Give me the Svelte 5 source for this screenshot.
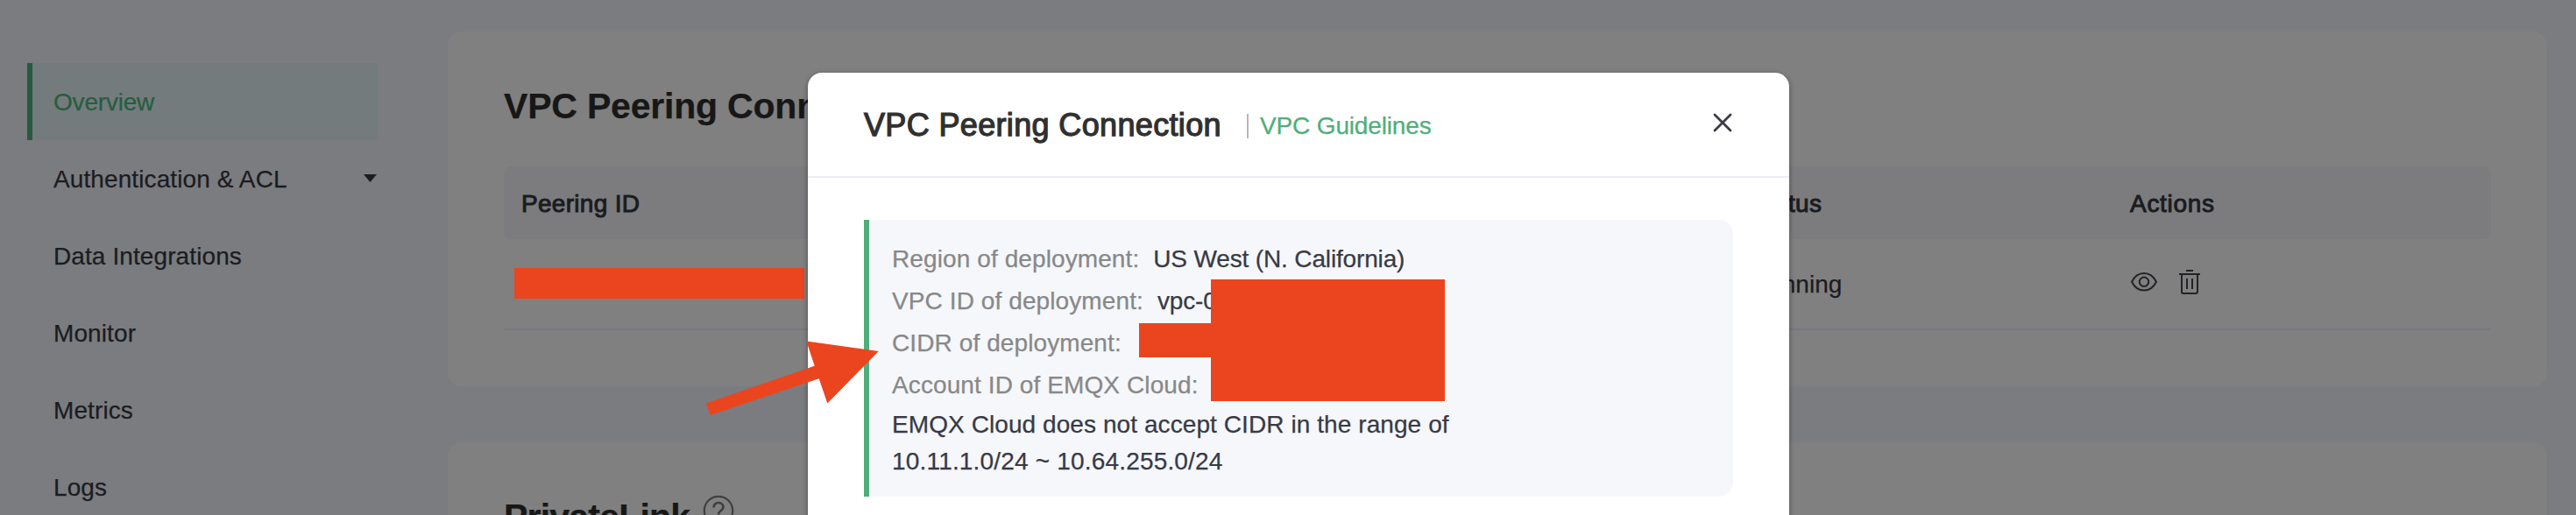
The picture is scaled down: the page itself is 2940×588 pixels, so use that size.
<script>
  const menu = ['Overview', 'Authentication & ACL', 'Data Integrations', 'Monitor', 'Metrics', 'Logs'];
</script>

<div class="page">
  <nav>
    {#each menu as item, i}
      <div class="item" class:active={i === 0}>
        <span>{item}</span>
        {#if i === 1}
          <svg class="caret" width="15" height="9" viewBox="0 0 15 9"><path d="M0 0h15L7.5 9z" fill="#1b1c20" /></svg>
        {/if}
      </div>
    {/each}
  </nav>

  <main>
    <section class="card">
      <h1>VPC Peering Connection</h1>
      <div class="row head"><span>Peering ID</span><span>Status</span><span class="last">Actions</span></div>
      <div class="row body">
        <span><i class="mask id"></i></span>
        <span class="state">Running</span>
        <span class="actions">
          <svg width="32" height="26" viewBox="0 0 32 26" fill="none" stroke="#222326" stroke-width="2">
            <path d="M2 12.8C5.400 6 10 3 16 3s10.600 3 14 9.800C26.600 19.600 22 22.600 16 22.600S5.400 19.600 2 12.800z" stroke-linejoin="round" />
            <circle cx="16" cy="12.800" r="5.200" />
          </svg>
          <svg width="24" height="28" viewBox="0 0 24 28" fill="none" stroke="#222326" stroke-width="2">
            <path d="M8 1h8M0 5h24M3 5v20q0 2 2 2h14q2 0 2-2V5M9 10v12M15 10v12" />
          </svg>
        </span>
      </div>
    </section>
    <section class="card second">
      <h1>PrivateLink
        <svg width="36" height="36" viewBox="0 0 36 36" fill="none" stroke="#3f3f40" stroke-width="2.200">
          <circle cx="18" cy="18" r="16.200" />
          <path d="M12.600 14.500c0-3.300 2.200-5.500 5.400-5.500s5.400 2 5.400 5c0 4-5.400 4.200-5.400 8.500" stroke-width="2.600" />
          <circle cx="18" cy="26.500" r=".8" />
        </svg>
      </h1>
    </section>
  </main>

  <div class="modal">
    <header>
      <h2>VPC Peering Connection</h2>
      <span class="bar"></span>
      <a href="#guidelines">VPC Guidelines</a>
      <svg class="close" width="22" height="22" viewBox="0 0 22 22"><path d="M2 2l18 18M20 2L2 20" stroke="#3a3b45" stroke-width="2.800" stroke-linecap="round" /></svg>
    </header>
    <div class="info">
      <p><label>Region of deployment:</label><b>US West (N. California)</b></p>
      <p><label>VPC ID of deployment:</label><b>vpc-0</b></p>
      <p class="wide"><label>CIDR of deployment:</label><b>1</b></p>
      <p><label>Account ID of EMQX Cloud:</label></p>
      <div class="note">EMQX Cloud does not accept CIDR in the range of<br /><span>10.11.1.0/24 ~ 10.64.255.0/24</span></div>
    </div>
  </div>

  <i class="mask cidr"></i>
  <i class="mask details"></i>
  <svg class="arrow" width="200" height="90" viewBox="804 387 200 90">
    <path d="M805.700 460.500L929.700 417.800L920.300 389.600L1002.700 401L944.300 460.500L934.700 432.300L810.800 474z" fill="#eb451f" />
  </svg>
</div>

<style>
  :global(body) { overflow: hidden; }
  .page {
    position: relative;
    box-sizing: border-box;
    width: 2940px;
    height: 588px;
    overflow: hidden;
    display: flex;
    background: #7b7c80;
    color: #1b1c20;
    font: 28px/40px "Liberation Sans", Arial, sans-serif;
    -webkit-text-stroke: 0.25px currentColor;
  }
  nav { width: 400px; margin: 72px 80px 0 31px; flex: none; }
  .item {
    box-sizing: border-box;
    height: 88px;
    padding-left: 24px;
    border-left: 6px solid transparent;
    display: flex;
    align-items: center;
    justify-content: space-between;
    letter-spacing: 0.1px;
  }
  .item.active { color: #265e3f; background: #747b7d; border-color: #275b40; letter-spacing: -0.2px; }
  .item span { padding-top: 1px; }
  .caret { margin: -1px 1px 0 0; }
  main { width: 2396px; flex: none; padding-top: 36px; display: flex; flex-direction: column; gap: 64px; }
  .card {
    box-sizing: border-box;
    flex: none;
    height: 405px;
    border-radius: 16px;
    background: #808080;
    padding: 60px 64px 0;
  }
  h1 {
    margin: 0 0 44px;
    height: 50px;
    font-size: 41px;
    line-height: 50px;
    letter-spacing: -0.2px;
    color: #171717;
    display: flex;
    gap: 15px;
  }
  .second h1 { letter-spacing: -0.8px; }
  .row { display: grid; grid-template-columns: 1403px 432px 1fr; align-items: center; padding-left: 20px; }
  .head { height: 83px; background: #7c7c7f; border-radius: 8px; letter-spacing: 0.3px; -webkit-text-stroke-width: 1px; }
  .head span { padding-top: 2px; }
  .head .last { letter-spacing: 0.7px; padding-left: 1px; }
  .body { height: 102px; border-bottom: 2px solid #777882; }
  .state { padding-top: 1px; }
  .actions { display: flex; align-items: center; gap: 24px; margin: -4px 0 0 1px; }
  .mask { background: #eb451f; }
  .id { display: block; width: 331px; height: 35px; margin: -1px 0 0 -8px; }
  .modal {
    position: absolute;
    left: 922px;
    top: 83px;
    width: 1120px;
    height: 560px;
    border-radius: 16px;
    background: #fff;
    box-shadow: 0 2px 6px rgba(0, 0, 0, .4);
  }
  header {
    box-sizing: border-box;
    height: 120px;
    padding: 0 64px;
    border-bottom: 2px solid #ebeff5;
    display: flex;
    align-items: center;
  }
  h2 {
    width: 437px;
    margin: 0;
    font-size: 36px;
    font-weight: normal;
    letter-spacing: 0.35px;
    white-space: nowrap;
    -webkit-text-stroke-width: 1.25px;
    color: #303030;
    padding-top: 1px;
  }
  .bar { width: 2px; height: 28px; background: #b4b7be; margin: 3px 13px 0 0; }
  a { color: #4eaf78; text-decoration: none; padding-top: 4px; letter-spacing: -0.15px; }
  .close { margin: -4px 1px 0 auto; }
  .info {
    box-sizing: border-box;
    width: 992px;
    height: 316px;
    margin: 48px 64px;
    padding: 21px 26px;
    background: #f5f7fb;
    border-left: 6px solid #4eaf78;
    border-radius: 0 16px 16px 0;
    color: #383a45;
  }
  p { margin: 0; height: 48px; line-height: 48px; display: flex; gap: 16px; }
  p.wide { gap: 19px; }
  label { color: #888; letter-spacing: 0.1px; }
  b { font-weight: normal; letter-spacing: -0.15px; }
  .note { line-height: 42px; letter-spacing: 0.08px; }
  .note span { letter-spacing: 0.18px; }
  .cidr { position: absolute; left: 1300px; top: 369px; width: 84px; height: 39px; }
  .details { position: absolute; left: 1382px; top: 319px; width: 267px; height: 139px; }
  .arrow { position: absolute; left: 804px; top: 387px; }
</style>
